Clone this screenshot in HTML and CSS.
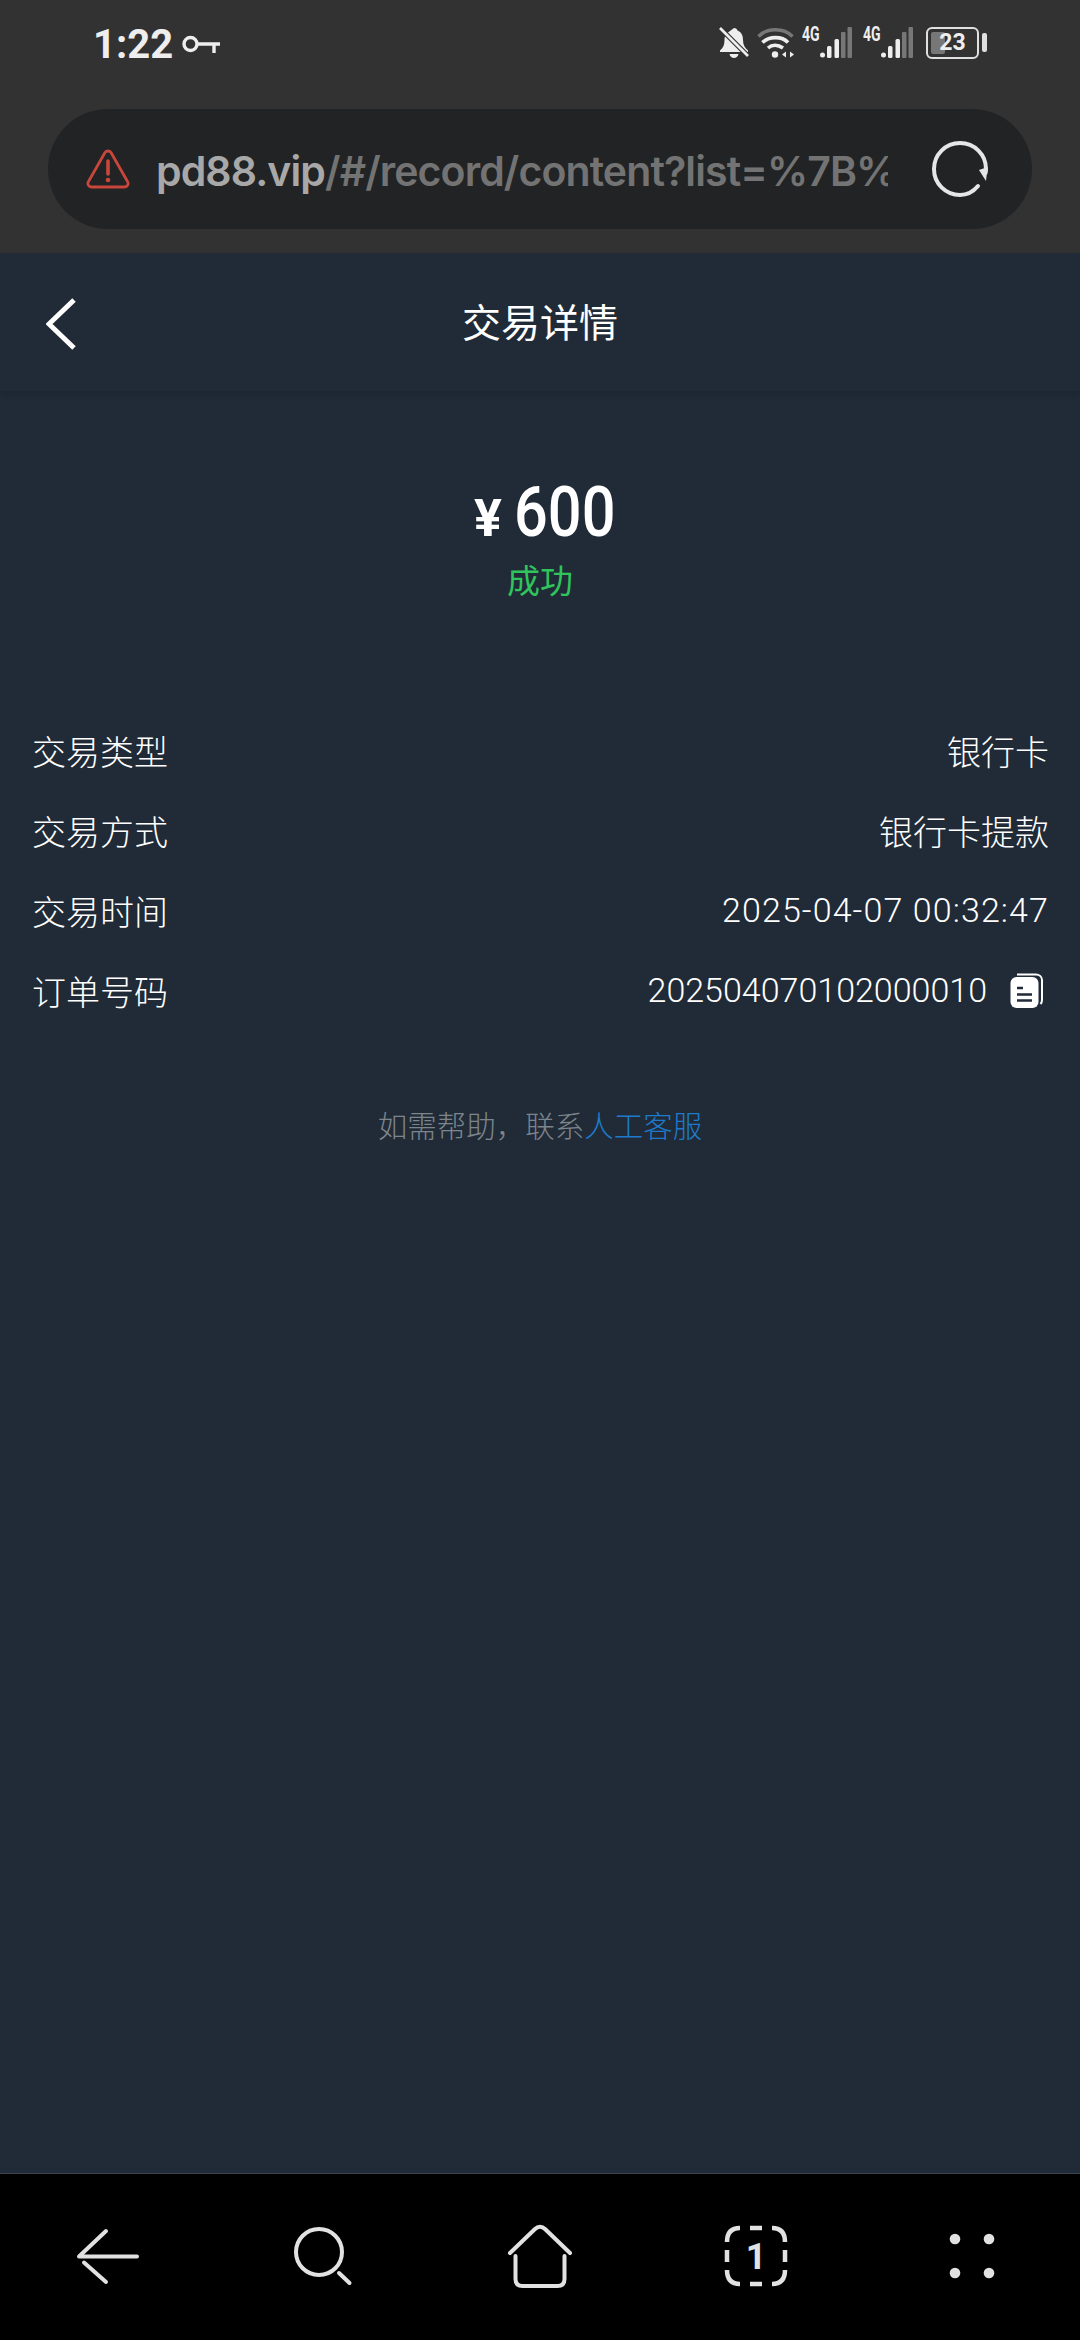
FILE: index.html
```html
<!DOCTYPE html>
<html lang="zh-CN">
<head>
  <meta charset="UTF-8" />
  <meta name="viewport" content="width=device-width, initial-scale=1" />
  <title>交易详情</title>
  <link rel="stylesheet" href="styles.css">
</head>
<body>

  <!-- Browser chrome -->
  <div class="chrome">
    <div class="status-bar">
      <div class="status-left">
        <span class="clock">1:22</span>
        <svg class="key-icon" viewBox="0 0 39 19" fill="none" stroke="#eee" stroke-width="3.4">
          <circle cx="8.5" cy="9" r="6.5" />
          <path d="M15 9H38M32 9V18" />
        </svg>
      </div>
      <div class="status-right">
        <svg class="bell-icon" viewBox="0 0 30 31">
          <path d="M15 1c2 0 3 1 3.500 2.500 4 1.500 5.500 5 5.500 9.500 0 5 2 8 5 10.500v1.500H1v-1.500c3-2.500 4.500-5.500 4.500-10.500 0-2.500.5-4.500 1.500-6z" fill="#eee" />
          <path d="M10.500 27h9c-.5 2.500-2.500 4-4.500 4s-4-1.500-4.500-4z" fill="#eee" />
          <path d="M1 1 29 29" stroke="#323232" stroke-width="5" />
          <path d="M1 1 29 29" stroke="#eee" stroke-width="2.600" />
        </svg>
        <svg class="wifi-icon" viewBox="0 0 40 31" fill="none" stroke-width="3.600">
          <path d="M1.500 9.500C10 .5 27 .5 35.500 9.500" stroke="#777" />
          <path d="M5.500 15.500C12 9 25 9 31 15.500" stroke="#eee" />
          <path d="M11 21c4-3.500 10-3.500 15 0" stroke="#eee" />
          <circle cx="18" cy="27.500" r="3.200" fill="#eee" stroke="none" />
          <path d="M29 24.500v6l-4-3zM33 24.500v6l4-3z" fill="#eee" stroke="none" />
        </svg>
        <div class="signal">
          <span class="net-type">4G</span>
          <svg class="bars" viewBox="0 0 32 31">
            <circle cx="2.500" cy="28" r="2.500" fill="#eee" />
            <rect x="7" y="19" width="4.500" height="12" rx="1.500" fill="#eee" />
            <rect x="14.500" y="12" width="4.500" height="19" rx="1.500" fill="#eee" />
            <rect x="21" y="5" width="4.500" height="26" rx="1" fill="#777" />
            <rect x="27.500" y="0" width="4.500" height="31" rx="1" fill="#777" />
          </svg>
        </div>
        <div class="signal">
          <span class="net-type">4G</span>
          <svg class="bars" viewBox="0 0 32 31">
            <circle cx="2.500" cy="28" r="2.500" fill="#eee" />
            <rect x="7" y="19" width="4.500" height="12" rx="1.500" fill="#eee" />
            <rect x="14.500" y="12" width="4.500" height="19" rx="1.500" fill="#eee" />
            <rect x="21" y="5" width="4.500" height="26" rx="1" fill="#777" />
            <rect x="27.500" y="0" width="4.500" height="31" rx="1" fill="#777" />
          </svg>
        </div>
        <div class="battery">
          <div class="battery-body">
            <span class="battery-fill"></span>
            <span class="battery-level">23</span>
          </div>
          <span class="battery-nub"></span>
        </div>
      </div>
    </div>

    <div class="url-bar">
      <svg class="warn-icon" viewBox="0 0 44 40" fill="none" stroke="#c8473a" stroke-width="2.800" stroke-linejoin="round">
        <path d="M19 3.500c1.500-2 4.500-2 6 0l16.500 29c1.500 2.500 0 5.500-3 5.500H5.500c-3 0-4.500-3-3-5.500z" />
        <path d="M22 12v13" stroke-width="3.600" stroke-linecap="round" />
        <circle cx="22" cy="31" r="2.300" fill="#c8473a" stroke="none" />
      </svg>
      <div class="url-text"><span class="url-host">pd88.vip</span>/#/record/content?list=%7B%</div>
      <svg class="reload-icon" viewBox="0 0 60 60" fill="none">
        <path d="M48 47C43 53 37 56 30 56 15.500 56 4 44.500 4 30S15.500 4 30 4s26 11.500 26 26c0 1.500 0 2.500-.5 4" stroke="#e6e6e6" stroke-width="4" stroke-linecap="round" />
        <path d="M49 31 57.500 28 56 42z" fill="#e6e6e6" />
      </svg>
    </div>
  </div>

  <!-- Page header -->
  <div class="page-header">
    <svg class="back-icon" viewBox="0 0 30 52" fill="none" stroke="#fff" stroke-width="5">
      <path d="M28 2 3 26 28 50" />
    </svg>
    <div class="page-title">交易详情</div>
  </div>

  <!-- Content -->
  <div class="content">
    <div class="amount">
      <span class="amount-sign">¥</span>
      <span class="amount-value">600</span>
    </div>
    <div class="amount-state">成功</div>

    <div class="detail-list">
      <div class="detail-row">
        <span>交易类型</span>
        <span>银行卡</span>
      </div>
      <div class="detail-row">
        <span>交易方式</span>
        <span>银行卡提款</span>
      </div>
      <div class="detail-row">
        <span>交易时间</span>
        <span class="detail-date">2025-04-07 00:32:47</span>
      </div>
      <div class="detail-row">
        <span>订单号码</span>
        <div class="order-no">
          <span>202504070102000010</span>
          <svg class="copy-icon" viewBox="0 0 34 37">
            <path d="M7 2.500h19c3 0 6 2 6 5.500v20c0 1.500-.5 3-1.500 4" fill="none" stroke="#fff" stroke-width="2" />
            <rect x="0.500" y="5" width="28" height="31" rx="6" fill="#fff" />
            <path d="M7 16h6M7 22.500h15M7 28.500h15" stroke="#202b37" stroke-width="2.400" />
          </svg>
        </div>
      </div>
    </div>

    <div class="help">如需帮助，联系<span class="help-link">人工客服</span></div>
  </div>

  <!-- Browser toolbar -->
  <div class="toolbar">
    <svg class="tool-icon" viewBox="0 0 72 72" fill="none" stroke="#e2e2e2" stroke-width="4" stroke-linecap="round">
      <path d="M7 36.500H65M7 36.500 34 11M12 42.500 34 62" />
    </svg>
    <svg class="tool-icon" viewBox="0 0 72 72" fill="none" stroke="#e2e2e2" stroke-width="4" stroke-linecap="round">
      <circle cx="31" cy="32" r="23" />
      <path d="M51 53 61.500 63" />
    </svg>
    <svg class="tool-icon" viewBox="0 0 72 72" fill="none" stroke="#e2e2e2" stroke-width="4" stroke-linecap="round" stroke-linejoin="round">
      <path d="M6 33 31 9c3-3 7-3 10 0L66 33" />
      <path d="M11.500 36V59c0 4 2 7 7 7H53.500c5 0 7-3 7-7V36" />
    </svg>
    <svg class="tool-icon" viewBox="0 0 72 72" fill="none" stroke="#e2e2e2" stroke-width="4.500">
      <path d="M7 22C7 12 12 8 20 8M52 8C60 8 65 12 65 22M65 50C65 60 60 64 52 64M20 64C12 64 7 60 7 50" />
      <path d="M30 8H42M65 30V42M42 64H30M7 42V30" />
      <text class="tab-count" x="36" y="49" text-anchor="middle">1</text>
    </svg>
    <svg class="tool-icon" viewBox="0 0 72 72" fill="#e2e2e2">
      <circle cx="19" cy="19" r="5.300" />
      <circle cx="53" cy="19" r="5.300" />
      <circle cx="19" cy="53" r="5.300" />
      <circle cx="53" cy="53" r="5.300" />
    </svg>
  </div>

</body>
</html>
```

FILE: styles.css
```css
/* ----------------- Base ----------------- */
body {
  margin: 0;
  width: 1080px;
  height: 2340px;
  overflow: hidden;
  display: flex;
  flex-direction: column;
  background-color: #202b37;
  color: #fff;
  font-family: Roboto, "Noto Sans CJK SC", sans-serif;
}

/* ----------------- Browser chrome ----------------- */
.chrome {
  background-color: #323232;
  height: 253px;
  box-sizing: border-box;
  padding: 0 48px;
}

.status-bar {
  height: 109px;
  display: flex;
  justify-content: space-between;
  padding: 0 45px 0 45px;
  box-sizing: border-box;
}

.status-left {
  display: flex;
  align-items: center;
  height: 88px;
  gap: 9px;
}

.clock {
  font-size: 40px;
  font-weight: 700;
  color: #eee;
}

.key-icon {
  width: 39px;
  height: 19px;
}

.status-right {
  display: flex;
  align-items: center;
  height: 85px;
  color: #eee;
}

.bell-icon {
  width: 30px;
  height: 31px;
  margin-right: 8px;
}

.wifi-icon {
  width: 40px;
  height: 31px;
  margin-right: 5px;
}

.signal {
  display: flex;
  margin-right: 11px;
  height: 31px;
}

.net-type {
  width: 18px;
  font-size: 20px;
  line-height: 15px;
  font-weight: 700;
  transform: scaleX(0.7);
  transform-origin: left;
  white-space: nowrap;
}

.bars {
  width: 32px;
  height: 31px;
}

.battery {
  display: flex;
  align-items: center;
  gap: 3px;
  margin-left: 2px;
}

.battery-body {
  position: relative;
  width: 53px;
  height: 32px;
  box-sizing: border-box;
  border: 2.5px solid #e0e0e0;
  border-radius: 6px;
  display: flex;
  align-items: center;
  justify-content: center;
}

.battery-fill {
  position: absolute;
  left: 3px;
  top: 3px;
  bottom: 3px;
  width: 14px;
  background-color: #777;
  border-radius: 2px;
}

.battery-level {
  position: relative;
  font-size: 23px;
  font-weight: 700;
  color: #eee;
}

.battery-nub {
  width: 5px;
  height: 19px;
  background-color: #e0e0e0;
  border-radius: 2px;
}

.url-bar {
  height: 120px;
  box-sizing: border-box;
  background-color: #222325;
  border-radius: 60px;
  display: flex;
  align-items: center;
  padding: 0 42px 0 38px;
}

.warn-icon {
  width: 44px;
  height: 40px;
  margin-right: 26px;
  flex: none;
}

.url-text {
  width: 732px;
  flex: none;
  overflow: hidden;
  white-space: nowrap;
  padding-top: 4px;
  font-family: Inter, sans-serif;
  font-size: 41px;
  font-weight: 600;
  letter-spacing: -0.9px;
  color: #737373;
}

.url-host {
  color: #a8a8a8;
}

.reload-icon {
  width: 60px;
  height: 60px;
  margin-left: auto;
  flex: none;
}

/* ----------------- Page header ----------------- */
.page-header {
  position: relative;
  height: 138px;
  display: flex;
  align-items: center;
  justify-content: center;
  padding-bottom: 5px;
  box-sizing: border-box;
  box-shadow: 0 3px 6px rgba(0, 0, 0, 0.12);
}

.back-icon {
  position: absolute;
  left: 46px;
  top: 45px;
  width: 30px;
  height: 52px;
}

.page-title {
  font-size: 39px;
  font-weight: 400;
}

/* ----------------- Content ----------------- */
.content {
  flex: 1;
  padding-top: 81px;
}

.amount {
  display: flex;
  justify-content: center;
  align-items: baseline;
  gap: 12px;
  height: 80px;
  line-height: 80px;
  padding-left: 6px;
  font-weight: 500;
}

.amount-sign {
  font-size: 52px;
  font-weight: 700;
}

.amount-value {
  width: 98px;
  font-size: 70px;
  transform: scaleX(0.85);
  transform-origin: left;
}

.amount-state {
  margin-top: 6px;
  text-align: center;
  font-size: 33px;
  line-height: 48px;
  color: #2fc45c;
}

.detail-list {
  margin-top: 104px;
  padding: 0 31px 0 32px;
}

.detail-row {
  height: 80px;
  display: flex;
  justify-content: space-between;
  align-items: center;
  font-size: 34px;
  font-weight: 300;
}

.detail-date {
  letter-spacing: 1.1px;
}

.order-no {
  display: flex;
  align-items: center;
  gap: 23px;
}

.copy-icon {
  width: 34px;
  height: 37px;
  margin-right: 5px;
}

.help {
  margin-top: 75px;
  text-align: center;
  font-size: 29.500px;
  font-weight: 300;
  line-height: 44px;
  color: #7d858c;
}

.help-link {
  color: #1f7acb;
}

/* ----------------- Browser toolbar ----------------- */
.toolbar {
  height: 167px;
  background-color: #000;
  border-top: 1px solid #3a444f;
  display: grid;
  grid-template-columns: repeat(5, 216px);
  justify-items: center;
  padding-top: 46px;
  box-sizing: border-box;
}

.tool-icon {
  width: 72px;
  height: 72px;
}

.tab-count {
  font-size: 36px;
  font-weight: 700;
  fill: #e2e2e2;
  stroke: none;
}
```
